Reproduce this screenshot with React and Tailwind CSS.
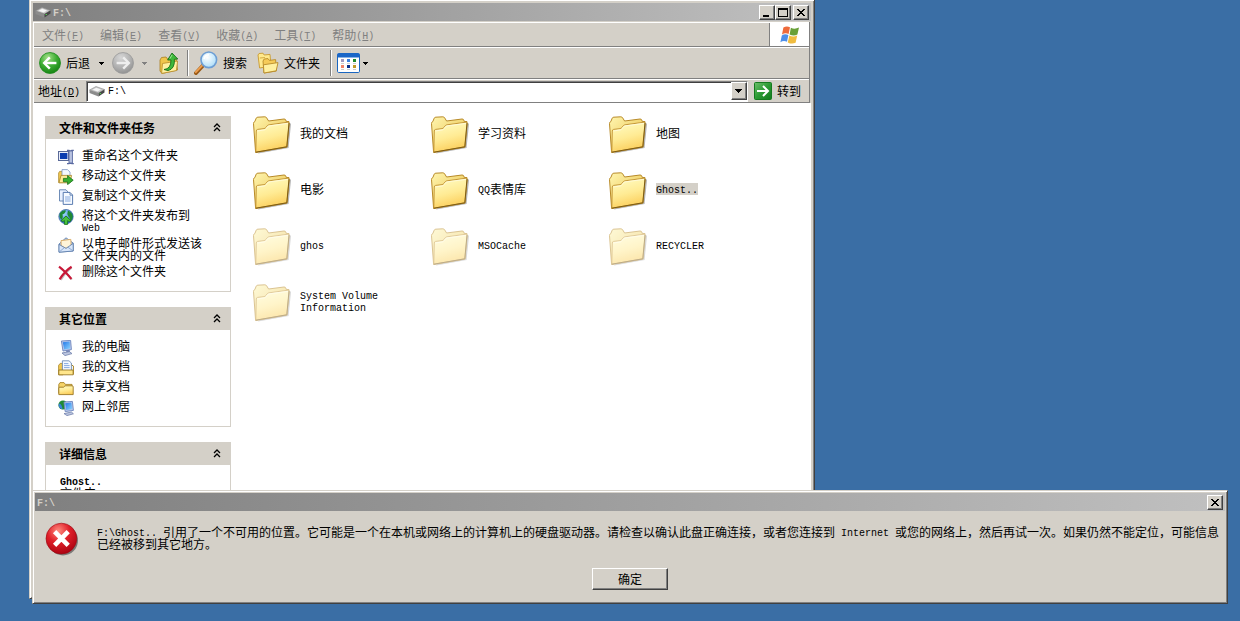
import React from "react";

const Latin = ({ children, className = "" }) => (
  <span className={"align-[1px] whitespace-pre-wrap font-['Liberation_Mono',monospace] text-[10px] leading-[0px] " + className}>{children}</span>
);

const Defs = () => (
  <svg className="absolute h-0 w-0" aria-hidden="true">
    <defs>
      <linearGradient id="folderBack" x1="0" y1="0" x2="1" y2="1">
        <stop offset="0" stopColor="#fff6b0" />
        <stop offset="1" stopColor="#e6b83a" />
      </linearGradient>
      <linearGradient id="folderFront" x1="0.3" y1="0" x2="0.6" y2="1">
        <stop offset="0" stopColor="#fffbc0" />
        <stop offset="0.5" stopColor="#ffeb94" />
        <stop offset="1" stopColor="#fbcb55" />
      </linearGradient>
      <radialGradient id="green" cx="0.4" cy="0.25" r="0.8">
        <stop offset="0" stopColor="#a5e08a" />
        <stop offset="0.5" stopColor="#3fae35" />
        <stop offset="1" stopColor="#12800f" />
      </radialGradient>
      <radialGradient id="gray" cx="0.4" cy="0.25" r="0.8">
        <stop offset="0" stopColor="#d6d6d6" />
        <stop offset="0.6" stopColor="#b0b0b0" />
        <stop offset="1" stopColor="#8e8e8e" />
      </radialGradient>
      <radialGradient id="red" cx="0.4" cy="0.25" r="0.8">
        <stop offset="0" stopColor="#ff8d80" />
        <stop offset="0.45" stopColor="#e0202a" />
        <stop offset="1" stopColor="#a80010" />
      </radialGradient>
      <radialGradient id="lens" cx="0.4" cy="0.35" r="0.7">
        <stop offset="0" stopColor="#ffffff" />
        <stop offset="1" stopColor="#a9dcf8" />
      </radialGradient>
      <linearGradient id="goGreen" x1="0" y1="0" x2="1" y2="1">
        <stop offset="0" stopColor="#6cc06a" />
        <stop offset="0.5" stopColor="#2c9a34" />
        <stop offset="1" stopColor="#117a1c" />
      </linearGradient>
      <linearGradient id="screen" x1="0" y1="0" x2="1" y2="1">
        <stop offset="0" stopColor="#2478e8" />
        <stop offset="1" stopColor="#8cd4ff" />
      </linearGradient>
      <radialGradient id="globe" cx="0.35" cy="0.3" r="0.8">
        <stop offset="0" stopColor="#9fd8ff" />
        <stop offset="1" stopColor="#1d5fc0" />
      </radialGradient>
    </defs>
  </svg>
);

const BigFolder = ({ faded }) => (
  <svg viewBox="0 0 48 48" className={"h-12 w-12 shrink-0 " + (faded ? "opacity-50" : "")} aria-hidden="true">
    <path d="M11 44.5 L41.5 39 L44 15 L43 14 Z" fill="#777" opacity="0.55" />
    <path d="M6.5 14.5 Q6.5 13 7.8 12.6 L9.3 9 Q9.7 8.2 10.8 8.2 L17.8 7.8 Q19 7.8 19.6 8.8 L21.6 12 L37 10 Q38.4 10 38.8 11 L39.2 12.4 L42 12.6 L39.8 38 L8.6 43.4 Z" fill="url(#folderBack)" stroke="#b88a28" strokeWidth="1" strokeLinejoin="round" />
    <path d="M9.3 22 Q9.3 20.6 10.6 20.4 L17 19.6 Q18.4 19.4 19 18.4 L20.2 16.8 Q20.8 16 22 15.8 L41 13.2 Q42.4 13.2 42.2 14.6 L39.9 37.8 L8.8 43.3 Z" fill="url(#folderFront)" stroke="#c09030" strokeWidth="0.9" strokeLinejoin="round" />
    <path d="M10.3 22 L18 20.8 L21.4 17 L41 14.4" fill="none" stroke="#fffbe0" strokeWidth="0.8" />
    <path d="M8.8 43.2 L39.8 37.8 L42 14" fill="none" stroke="#7c5c14" strokeWidth="1" />
  </svg>
);

const Drive = ({ className }) => (
  <svg viewBox="0 0 16 12" className={className} aria-hidden="true">
    <path d="M0.5 5 L7 1.5 L15.5 4.5 L9.5 8 Z" fill="#c8c8c8" stroke="#8b8b8b" strokeWidth="0.6" />
    <path d="M0.5 5 L9.5 8 L9.5 11.5 L0.5 8 Z" fill="#8c8c8c" />
    <path d="M9.5 8 L15.5 4.5 L15.5 7.4 L9.5 11.5 Z" fill="#484848" />
    <path d="M3.5 4.7 L7.3 2.8 L12 4.4 L8.6 6.4 Z" fill="#f6f6f6" />
    <rect x="10.6" y="8" width="1.4" height="1" fill="#4fd04f" />
  </svg>
);

const RoundArrow = ({ fill, back }) => (
  <svg viewBox="0 0 22 22" className="h-[22px] w-[22px]" aria-hidden="true">
    <circle cx="11" cy="11" r="10.5" fill={fill} stroke={back ? "#1c8a1c" : "#999"} strokeWidth="0.8" />
    <g transform={back ? "" : "matrix(-1 0 0 1 22 0)"} fill="none" stroke={back ? "#fff" : "#eee"} strokeWidth="2.4">
      <path d="M10.8 5.4 L5.2 11 L10.8 16.6" />
      <path d="M5.6 11 H17.4" />
    </g>
  </svg>
);

const Caret = ({ className = "fill-black" }) => (
  <svg viewBox="0 0 5 3" className={"h-[3px] w-[5px] " + className} aria-hidden="true" shapeRendering="crispEdges">
    <path d="M0 0 H5 L2.5 3 Z" />
  </svg>
);

const UpFolder = () => (
  <svg viewBox="0 0 20 22" className="h-[22px] w-5" aria-hidden="true">
    <path d="M1 8 L2.5 5.5 L7 5 L8.5 7 L17 6 L18.5 18 L3 21.5 L1 19 Z" fill="#f0c64c" stroke="#a87e20" strokeWidth="0.8" />
    <path d="M3.5 11.5 L18.6 9 L17.4 18.6 L2.6 21.4 Z" fill="#fff0a0" stroke="#b88a28" strokeWidth="0.8" />
    <path d="M5 17.5 Q12 17 12 8 L8.6 8 L13 1 L18.8 7 L15.4 7.2 Q16 17 9 18.6 Z" fill="#3eb83a" stroke="#17701a" strokeWidth="0.9" />
    <path d="M13 3 L11 6.6" stroke="#a8efa0" strokeWidth="0.9" />
  </svg>
);

const Magnifier = () => (
  <svg viewBox="0 0 24 24" className="h-6 w-6" aria-hidden="true">
    <path d="M9 14.5 L2 22" stroke="#9a5a18" strokeWidth="4" strokeLinecap="round" />
    <path d="M8.6 14.2 L1.8 21.2" stroke="#f0a050" strokeWidth="1.8" strokeLinecap="round" />
    <circle cx="14.8" cy="8.8" r="7.8" fill="url(#lens)" stroke="#6d9ed4" strokeWidth="1.6" />
    <path d="M10 8 Q11 4 15 3.8" fill="none" stroke="#fff" strokeWidth="1.6" />
  </svg>
);

const Folders = () => (
  <svg viewBox="0 0 22 22" className="h-[22px] w-[22px]" aria-hidden="true">
    <path d="M1 3 L2 1.5 L6 1.2 L7.2 3 L13 2.4 L14 14 L2.6 16 Z" fill="#ffe98c" stroke="#c89a30" strokeWidth="0.9" />
    <path d="M6 9 L7.2 7 L11 6.6 L12.4 8.4 L18.6 7.6 L19.4 19 L7 21 Z" fill="#f6cb58" stroke="#b88a28" strokeWidth="0.9" />
    <path d="M6.4 12.8 L21 10.6 L19.2 18.8 L7 21 Z" fill="#fff0a0" stroke="#b88a28" strokeWidth="0.9" />
    <path d="M2.8 6 L8 5.6" stroke="#c89a30" strokeWidth="0.8" />
  </svg>
);

const Views = () => (
  <svg viewBox="0 0 23 20" className="h-5 w-[23px]" aria-hidden="true">
    <rect x="0.5" y="0.5" width="22" height="19" rx="1.2" fill="#fff" stroke="#1a66c0" />
    <rect x="0.5" y="0.5" width="22" height="4" rx="1" fill="#1a66c8" />
    <rect x="4" y="6" width="3" height="3" fill="#a09ac0" />
    <rect x="10" y="6" width="3" height="3" fill="#3a80e0" />
    <rect x="16" y="6" width="3" height="3" fill="#1f8a2c" />
    <rect x="4" y="12" width="3" height="3" fill="#f08468" />
    <rect x="10" y="12" width="3" height="3" fill="#0a2f88" />
    <rect x="16" y="12" width="3" height="3" fill="#c09a28" />
    <path d="M4 10.5h3M10 10.5h3M16 10.5h3M4 16.5h3M10 16.5h3M16 16.5h3" stroke="#ccc" strokeWidth="1" />
  </svg>
);

const WinFlag = () => (
  <svg viewBox="0 0 20 20" className="h-5 w-5" aria-hidden="true">
    <path d="M3.4 2.6 Q6.5 0.4 10 2.2 L8.6 9 Q5.4 7.4 2 9.4 Z" fill="#ee6a3a" />
    <path d="M10.9 2.8 Q14.6 4.6 19 2.6 L17.4 9.6 Q13.6 11.4 9.6 9.4 Z" fill="#68a038" />
    <path d="M1.8 10.4 Q5 8.4 8.4 10 L7 16.8 Q3.6 15.2 0.4 17.2 Z" fill="#4d8ee8" />
    <path d="M9.3 10.4 Q13 12.4 17.2 10.6 L15.6 17.8 Q11.8 19.6 7.8 17.4 Z" fill="#f0bc40" />
  </svg>
);

const GoArrow = () => (
  <svg viewBox="0 0 18 18" className="h-[18px] w-[18px]" aria-hidden="true">
    <rect x="0.5" y="0.5" width="17" height="17" rx="1" fill="url(#goGreen)" stroke="#157a1e" />
    <path d="M3 9 H14 M9 4 L14 9 L9 14" fill="none" stroke="#fff" strokeWidth="2" />
  </svg>
);

const Small = ({ children }) => (
  <svg viewBox="0 0 16 16" className="h-4 w-4 shrink-0" aria-hidden="true">{children}</svg>
);

const RenameIcon = () => (
  <Small>
    <rect x="0.5" y="2.5" width="10" height="9" fill="#e8ecf8" stroke="#5a6a98" />
    <rect x="2" y="4" width="7.4" height="6" fill="#0a3cb0" />
    <path d="M9 1.4 H11 L12.4 2.4 L13.8 1.4 H15.8 M9 14.6 H11 L12.4 13.6 L13.8 14.6 H15.8" fill="none" stroke="#5a6aa0" strokeWidth="1.4" />
    <rect x="11" y="2" width="3.4" height="12" fill="#b8c2e0" stroke="#5a6aa0" strokeWidth="0.9" />
  </Small>
);
const MoveIcon = () => (
  <Small>
    <path d="M0.6 4 L1.6 2.4 L4 2.4 L5 3.6 V13.6 H0.6 Z" fill="#f2c850" stroke="#a88428" strokeWidth="0.7" />
    <path d="M4 0.6 H9.4 L12 3 V9 H4 Z" fill="#f4f8ff" stroke="#7c96c0" strokeWidth="0.8" />
    <path d="M1 13.8 L3 6.4 H13.6 L12 13.8 Z" fill="#ffeb98" stroke="#a88428" strokeWidth="0.8" />
    <path d="M5.4 9.4 H9.6 V6.6 L15.2 11.2 L9.6 15.6 V12.8 H5.4 Z" fill="#38b030" stroke="#156e18" strokeWidth="0.8" />
  </Small>
);
const CopyIcon = () => (
  <Small>
    <path d="M1.5 0.8 H8 L10 3 V12 H1.5 Z" fill="#e8f0ff" stroke="#6080b0" strokeWidth="0.9" />
    <path d="M5.2 3.4 H12 L14.6 6 V15.4 H5.2 Z" fill="#f6faff" stroke="#4a6ea8" strokeWidth="0.9" />
    <path d="M12 3.6 V6.2 H14.4" fill="none" stroke="#4a6ea8" strokeWidth="0.8" />
    <path d="M7 8h5.6M7 10h5.6M7 12h5.6" stroke="#7ca0dc" strokeWidth="0.9" />
  </Small>
);
const PublishIcon = () => (
  <Small>
    <circle cx="8" cy="7.6" r="7.2" fill="url(#globe)" stroke="#1c4c90" strokeWidth="0.6" />
    <path d="M2 4 Q5 0.6 8 1.6 Q7 5 4.4 5.4 Q5.6 8.4 3.4 10.6 Q0.4 8 2 4 Z M10 1.4 Q14.6 3.4 14.8 7.6 Q14.6 11 12 13 Q13 9 10.4 7.4 Q8.6 4.6 10 1.4 Z" fill="#1f8a34" />
    <path d="M8 7 L13 11.6 L11 12.6 L9.6 11.6 V15.4 H6.4 V11.6 L5 12.6 L3 11.6 Z" fill="#48c23c" stroke="#156e18" strokeWidth="0.8" />
  </Small>
);
const MailIcon = () => (
  <Small>
    <path d="M1 7 L8 0.8 L15.2 6 V14 L1 15.2 Z" fill="#b4ccee" stroke="#5878a8" strokeWidth="0.8" />
    <path d="M3 3.6 L12.8 2.4 L13.2 9 L8 11.4 L3.2 9 Z" fill="#fff4d8" stroke="#d8a860" strokeWidth="0.9" />
    <path d="M1 7.4 L8 11.4 L15.2 6.4 V14 L1 15.2 Z" fill="#d8e6fa" stroke="#5878a8" strokeWidth="0.8" />
    <path d="M1.2 15 L6.4 10.6 M15 13.8 L9.8 10.2" stroke="#7c9cc8" strokeWidth="0.8" />
  </Small>
);
const DeleteIcon = () => (
  <Small>
    <path d="M2.6 3.4 Q8 7.4 14 14.6 M13.8 2.8 Q8 7 3 15" fill="none" stroke="#999" strokeWidth="1.6" opacity="0.6" />
    <path d="M1 1.6 Q7 6 13.4 14 M13.6 1.8 Q7 6 1.6 14.4" fill="none" stroke="#c81838" strokeWidth="2.2" />
  </Small>
);
const ComputerIcon = () => (
  <Small>
    <path d="M3.4 1 L12.6 0.4 L13.4 9.6 L5 11 Z" fill="#b8c8ec" stroke="#6c84bc" strokeWidth="0.9" />
    <path d="M4.8 2.2 L11.6 1.6 L12.2 8.4 L6.2 9.4 Z" fill="url(#screen)" />
    <path d="M8 10.4 L11.6 10 L12 12.4 L8.6 13 Z" fill="#7080b4" />
    <path d="M4 13 L11.4 11.6 L14 13.6 L7 15.6 Z" fill="#bcc6e0" stroke="#7080ac" strokeWidth="0.8" />
  </Small>
);
const DocsIcon = () => (
  <Small>
    <path d="M0.6 5.4 L2.2 3.4 H5 V14.8 H0.6 Z" fill="#f2c850" stroke="#a88428" strokeWidth="0.8" />
    <path d="M4.4 0.8 H11 L13.4 3 V11 H4.4 Z" fill="#f4f9ff" stroke="#6080b0" strokeWidth="0.8" />
    <path d="M6 3.6h4.4M6 5.6h5.6M6 7.6h5.6" stroke="#7ca0dc" strokeWidth="0.9" />
    <path d="M0.8 14.8 V10 H15.2 V14.8 Z" fill="#ffe68c" stroke="#8c6c1c" strokeWidth="0.8" />
    <path d="M13.6 5 L15.4 6 V14.4" fill="none" stroke="#a88428" strokeWidth="1" />
  </Small>
);
const SharedIcon = () => (
  <Small>
    <path d="M0.8 13.4 V4.4 L2 2.6 H6 L7.4 4.4 H14 V6.4" fill="#f6d468" stroke="#a88428" strokeWidth="0.9" />
    <path d="M0.8 14.6 V8 Q0.8 7.2 1.8 7.2 H5.6 L7 5.8 H14.2 Q15.2 5.8 15.2 6.8 V14.6 Z" fill="url(#folderFront)" stroke="#9a7622" strokeWidth="0.9" />
  </Small>
);
const NetworkIcon = () => (
  <Small>
    <circle cx="5" cy="5" r="4.6" fill="#1f8a34" />
    <path d="M1 3.6 Q4 4 4.6 9.4 Q1.4 8.6 0.6 6 Z" fill="#3a80d8" />
    <path d="M6 2 L14.4 1.4 L15.4 10.4 L7.2 11.6 Z" fill="#b8c8ec" stroke="#6c84bc" strokeWidth="0.9" />
    <path d="M7.2 3.2 L13.4 2.6 L14.2 9 L8.2 10 Z" fill="url(#screen)" />
    <path d="M6 13.6 L13.4 12 L15.4 13.8 L9 15.6 Z" fill="#bcc6e0" stroke="#7080ac" strokeWidth="0.8" />
  </Small>
);

const ErrorIcon = () => (
  <svg viewBox="0 0 34 34" className="h-[34px] w-[34px] shrink-0" aria-hidden="true">
    <circle cx="18" cy="18.4" r="15" fill="#555" opacity="0.7" />
    <circle cx="16.4" cy="16.6" r="15.4" fill="url(#red)" stroke="#980810" strokeWidth="0.6" />
    <path d="M9.6 9.6 L23.2 23.4 M23.2 9.6 L9.6 23.4" stroke="#fff" strokeWidth="4.6" />
  </svg>
);

const raised = "border border-t-white border-l-white border-r-[#404040] border-b-[#404040] bg-[#d4d0c8] shadow-[inset_-1px_-1px_0_#808080]";

const CaptionButton = ({ label, children }) => (
  <button type="button" aria-label={label} className={"flex h-[15px] w-4 items-center justify-center " + raised}>
    <svg viewBox="0 0 10 9" className="h-[9px] w-2.5" shapeRendering="crispEdges" aria-hidden="true">{children}</svg>
  </button>
);

const Cross = () => <path d="M1 1h2v1h1v1h2v-1h1v-1h2v1h-1v1h-1v1h-1v1h1v1h1v1h1v1h-2v-1h-1v-1h-2v1h-1v1h-2v-1h1v-1h1v-1h1v-1h-1v-1h-1v-1h-1z" />;

const Rule = () => <span className="h-[26px] w-0.5 border-l border-[#808080] bg-white" />;

const MenuItem = ({ name, k }) => (
  <li>
    <button type="button" className="block whitespace-nowrap text-[#808080]">
      {name}
      <Latin>(<u>{k}</u>)</Latin>
    </button>
  </li>
);

const Panel = ({ title, children }) => (
  <section>
    <h2>
      <button type="button" className="flex h-[23px] w-full items-center justify-between bg-[#d4d0c8] pr-2.5 pl-3.5 font-bold">
        {title}
        <svg viewBox="0 0 8 9" className="h-[9px] w-2" aria-hidden="true">
          <path d="M1 4 L4 1 L7 4 M1 8 L4 5 L7 8" fill="none" stroke="#000" strokeWidth="1.3" />
        </svg>
      </button>
    </h2>
    <div className="border border-t-0 border-[#d4d0c8] py-2.5 px-3">{children}</div>
  </section>
);

const TaskList = ({ items }) => (
  <ul className="flex flex-col gap-1">
    {items.map(([Icon, text], i) => (
      <li key={i}>
        <a href="#" className="flex min-h-4 items-start gap-2">
          <Icon />
          <span className="leading-3">{text}</span>
        </a>
      </li>
    ))}
  </ul>
);

const tasks = [
  [RenameIcon, "重命名这个文件夹"],
  [MoveIcon, "移动这个文件夹"],
  [CopyIcon, "复制这个文件夹"],
  [PublishIcon, <>将这个文件夹发布到<br /><Latin>Web</Latin></>],
  [MailIcon, <>以电子邮件形式发送该<br />文件夹内的文件</>],
  [DeleteIcon, "删除这个文件夹"],
];

const places = [
  [ComputerIcon, "我的电脑"],
  [DocsIcon, "我的文档"],
  [SharedIcon, "共享文档"],
  [NetworkIcon, "网上邻居"],
];

const folders = [
  { name: "我的文档" },
  { name: "学习资料" },
  { name: "地图" },
  { name: "电影" },
  { name: <><Latin>QQ</Latin>表情库</> },
  { name: <Latin>Ghost..</Latin>, selected: true },
  { name: <Latin>ghos</Latin>, faded: true },
  { name: <Latin>MSOCache</Latin>, faded: true },
  { name: <Latin>RECYCLER</Latin>, faded: true },
  { name: <><Latin>System Volume</Latin><br /><Latin>Information</Latin></>, faded: true },
];

const frame = "border border-t-[#d4d0c8] border-l-[#d4d0c8] border-r-[#404040] border-b-[#404040] bg-[#d4d0c8] shadow-[inset_1px_1px_0_#fff,inset_-1px_-1px_0_#808080]";

const Explorer = () => (
  <main className={"absolute -top-px bottom-[22px] left-[29px] flex w-[786px] flex-col overflow-hidden p-[3px] " + frame}>
    <header className="flex h-[18px] shrink-0 items-center gap-0.5 bg-linear-to-r from-[#808080] to-[#c0c0c0] px-0.5">
      <Drive className="h-3 w-4" />
      <h1 className="flex-1 text-[#d4d0c8]"><Latin className="font-bold">F:\</Latin></h1>
      <div className="flex gap-0.5">
        <div className="flex">
          <CaptionButton label="最小化"><path d="M1 7h6v2h-6z" /></CaptionButton>
          <CaptionButton label="最大化"><path d="M0 0h10v9h-10z M1 2v6h8v-6z" fillRule="evenodd" /></CaptionButton>
        </div>
        <CaptionButton label="关闭"><Cross /></CaptionButton>
      </div>
    </header>

    <div className="mt-px mr-px shrink-0 border-r border-l border-r-[#808080] border-l-white">
      <nav className="flex h-[25px] border-t border-b border-t-white border-b-[#808080]">
        <ul className="flex flex-1 items-center gap-4 pl-2">
          <MenuItem name="文件" k="F" />
          <MenuItem name="编辑" k="E" />
          <MenuItem name="查看" k="V" />
          <MenuItem name="收藏" k="A" />
          <MenuItem name="工具" k="T" />
          <MenuItem name="帮助" k="H" />
        </ul>
        <div className="flex w-10 items-center justify-center border-l border-[#808080] bg-white"><WinFlag /></div>
      </nav>

      <div className="flex h-8 items-center border-t border-b border-t-white border-b-[#808080] pl-[5px] whitespace-nowrap">
        <button type="button" className="flex items-center gap-[5px]"><RoundArrow back fill="url(#green)" />后退<span className="pl-1"><Caret /></span></button>
        <button type="button" aria-label="前进" className="ml-2 flex items-center gap-2"><RoundArrow fill="url(#gray)" /><Caret className="fill-[#808080]" /></button>
        <button type="button" aria-label="向上" className="ml-3"><UpFolder /></button>
        <span className="ml-2 flex"><Rule /></span>
        <button type="button" className="ml-[5px] flex items-center gap-[5px]"><Magnifier />搜索</button>
        <button type="button" className="ml-2.5 flex items-center gap-[5px]"><Folders />文件夹</button>
        <span className="ml-2.5 flex"><Rule /></span>
        <button type="button" aria-label="查看方式" className="ml-[5px] flex items-center gap-[3px]"><Views /><Caret /></button>
      </div>

      <div className="flex h-6 items-center gap-1.5 border-t border-b border-t-white border-b-[#808080] pr-2 pl-1">
        <label htmlFor="address" className="whitespace-nowrap">地址<Latin>(<u>D</u>)</Latin></label>
        <div className="flex h-[21px] flex-1 items-center border border-t-[#808080] border-r-white border-b-white border-l-[#808080] bg-white pl-0.5 shadow-[inset_1px_1px_0_#404040]">
          <Drive className="h-3 w-4" />
          <input id="address" defaultValue="F:\" className="min-w-0 flex-1 bg-transparent pl-[3px] pt-0.5 font-['Liberation_Mono',monospace] text-[10px] outline-none" />
          <button type="button" aria-label="展开地址列表" className={"flex h-[18px] w-4 items-center justify-center " + raised}>
            <svg viewBox="0 0 7 4" className="h-1 w-[7px]" shapeRendering="crispEdges" aria-hidden="true"><path d="M0 0 H7 L3.5 4 Z" /></svg>
          </button>
        </div>
        <button type="button" className="flex items-center gap-[5px] whitespace-nowrap"><GoArrow />转到</button>
      </div>
    </div>

    <div className="flex min-h-0 flex-1 overflow-hidden bg-white pl-3">
      <aside className="flex w-[186px] shrink-0 flex-col gap-[15px] pt-[13px]">
        <Panel title="文件和文件夹任务"><TaskList items={tasks} /></Panel>
        <Panel title="其它位置"><TaskList items={places} /></Panel>
        <Panel title="详细信息">
          <div className="pl-0.5 leading-3">
            <p><Latin className="font-bold">Ghost..</Latin></p>
            <p>文件夹</p>
          </div>
        </Panel>
      </aside>
      <ul className="grid flex-1 auto-rows-[56px] grid-cols-[repeat(auto-fill,178px)] pt-0.5 pl-4">
        {folders.map((f, i) => (
          <li key={i} className="flex items-center gap-[5px]">
            <BigFolder faded={f.faded} />
            <span className={"leading-3 " + (f.selected ? "bg-[#d4d0c8]" : "")}>{f.name}</span>
          </li>
        ))}
      </ul>
    </div>
  </main>
);

const ErrorDialog = () => (
  <div role="alertdialog" aria-labelledby="dlg-title" aria-describedby="dlg-text" className={"absolute top-[490px] right-3 left-8 p-0.5 " + frame}>
    <header className="flex h-[18px] items-center justify-between bg-linear-to-r from-[#808080] to-[#c0c0c0] px-0.5">
      <h2 id="dlg-title" className="text-[#d4d0c8]"><Latin className="font-bold">F:\</Latin></h2>
      <CaptionButton label="关闭"><Cross /></CaptionButton>
    </header>
    <div className="flex gap-[18px] pt-[11px] pl-2.5">
      <ErrorIcon />
      <p id="dlg-text" className="pt-1 leading-3">
        <Latin>{"F:\\Ghost.. "}</Latin>引用了一个不可用的位置。它可能是一个在本机或网络上的计算机上的硬盘驱动器。请检查以确认此盘正确连接，或者您连接到<Latin>{" Internet "}</Latin>或您的网络上，然后再试一次。如果仍然不能定位，可能信息已经被移到其它地方。
      </p>
    </div>
    <div className="flex justify-center pt-3 pb-[11px]">
      <button type="button" className={"h-[22px] w-[76px] " + raised}>确定</button>
    </div>
  </div>
);

export default function App() {
  return (
    <div className="relative min-h-screen overflow-hidden bg-[#3a6ea5] font-['Noto_Sans_CJK_SC',sans-serif] text-xs text-black">
      <Defs />
      <Explorer />
      <ErrorDialog />
    </div>
  );
}
